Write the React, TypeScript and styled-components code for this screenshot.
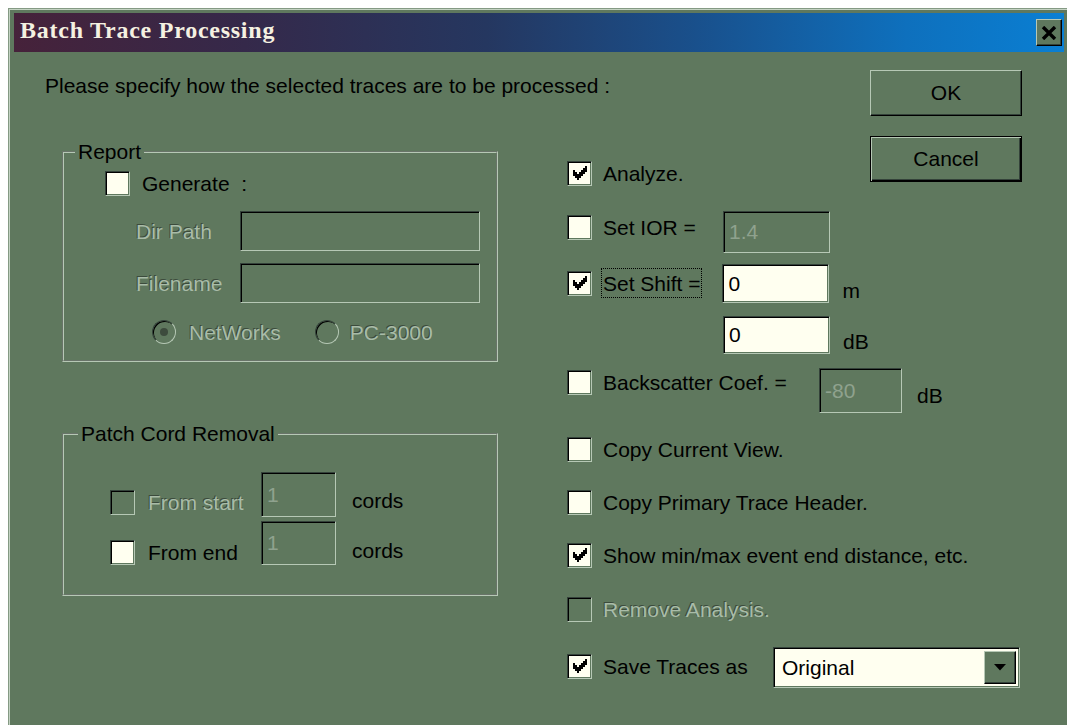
import React from 'react';
import styled, { createGlobalStyle, css } from 'styled-components';

// Colour scheme of the dialog (a green "desktop theme")
const C = {
  face: '#5f785e',
  light: '#b6c8b5',
  shadow: '#34423a',
  ivory: '#fffff0',
  grayText: '#8fa28e',
  etchLight: '#a9bca8',
  etchDark: '#3c4b3c',
};

const FONT = `"Liberation Sans", Arial, sans-serif`;

const Global = createGlobalStyle`
  html, body {
    margin: 0;
    padding: 0;
    background: #fff;
    overflow: hidden;
  }
  body {
    width: 1067px;
    height: 725px;
    font-family: ${FONT};
    font-size: 21px;
    color: #000;
  }
`;

const sunken = css`
  box-sizing: border-box;
  border: 1px solid;
  border-color: ${C.shadow} ${C.light} ${C.light} ${C.shadow};
  box-shadow: inset 1px 1px 0 #000, inset -1px -1px 0 ${C.face};
`;

const raised = css`
  box-sizing: border-box;
  border: 1px solid;
  border-color: ${C.light} #000 #000 ${C.light};
  box-shadow: inset -1px -1px 0 ${C.shadow};
  background: ${C.face};
`;

const etched = css`
  color: ${C.etchLight};
  text-shadow: -1px -1px 0 ${C.etchDark};
`;

/* ---------- window frame ---------- */

const Window = styled.div`
  box-sizing: border-box;
  margin: 8px 0 0 8px;
  width: 1062px;
  height: 717px;
  overflow: hidden;
  background: ${C.face};
  border: 1px solid #859a84;
  border-bottom: none;
  box-shadow: inset 1px 1px 0 #c3d2c2;
  padding: 4px 5px 0 5px;
  display: flex;
  flex-direction: column;
`;

const TitleBar = styled.div`
  height: 39px;
  flex: none;
  display: flex;
  align-items: center;
  justify-content: space-between;
  padding: 0 2px 0 6px;
  background: linear-gradient(
    to right,
    #46223a 0%,
    #35294a 22%,
    #253760 45%,
    #19508c 65%,
    #0e70bd 85%,
    #0a7fd3 100%
  );
`;

const TitleText = styled.span`
  font-family: "Liberation Serif", "Times New Roman", serif;
  font-weight: bold;
  font-size: 24px;
  line-height: 26px;
  letter-spacing: 0.75px;
  color: #f5f1e1;
  margin-bottom: 5px;
`;

const CloseButton = styled.button`
  ${raised};
  width: 26px;
  height: 27px;
  padding: 0;
  display: flex;
  align-items: center;
  justify-content: center;
`;

/* ---------- dialog body ---------- */

const Body = styled.div`
  display: grid;
  grid-template-columns: 455px 67px 455px;
  grid-template-rows: auto auto;
  align-items: start;
  padding: 18px 0 0 31px;
`;

const Intro = styled.p`
  grid-row: 1;
  grid-column: 1 / 3;
  margin: 4px 0 0 0;
  line-height: 24px;
  white-space: nowrap;
`;

const ButtonStack = styled.div`
  grid-row: 1 / 3;
  grid-column: 3;
  justify-self: end;
  display: flex;
  flex-direction: column;
  gap: 20px;
  position: relative;
  z-index: 1;
`;

const PushButton = styled.button<{ $default?: boolean }>`
  ${raised};
  width: 152px;
  height: 46px;
  font-family: ${FONT};
  font-size: 21px;
  color: #000;
  padding: 0;
  ${(p) =>
    p.$default &&
    css`
      border: 1px solid #000;
      box-shadow: inset 1px 1px 0 ${C.light}, inset -1px -1px 0 #000,
        inset -2px -2px 0 ${C.shadow};
    `}
`;

const LeftColumn = styled.div`
  grid-row: 2;
  grid-column: 1;
  display: flex;
  flex-direction: column;
`;

const Group = styled.fieldset<{ $mt: number; $pt: number; $pb: number }>`
  box-sizing: border-box;
  margin: ${(p) => p.$mt}px 0 0 17px;
  width: 436px;
  min-inline-size: 0;
  padding: ${(p) => p.$pt}px 0 ${(p) => p.$pb}px 0;
  border: 2px groove ${C.light};
  display: flex;
  flex-direction: column;
`;

const Legend = styled.legend<{ $ml: number }>`
  margin-left: ${(p) => p.$ml}px;
  padding: 0 3px;
  line-height: 24px;
  font-size: 21px;
`;

const Row = styled.div<{ $mt?: number; $ml?: number; $align?: string }>`
  display: flex;
  align-items: ${(p) => p.$align ?? 'center'};
  margin-top: ${(p) => p.$mt ?? 0}px;
  margin-left: ${(p) => p.$ml ?? 0}px;
`;

const CheckItem = styled.div<{ $gap: number; $mt?: number; $mb?: number; $ml?: number }>`
  display: flex;
  align-items: center;
  gap: ${(p) => p.$gap}px;
  margin-top: ${(p) => p.$mt ?? 0}px;
  margin-bottom: ${(p) => p.$mb ?? 0}px;
  margin-left: ${(p) => p.$ml ?? 0}px;
  flex: none;
`;

const Label = styled.span<{ $w?: number; $disabled?: boolean; $focus?: boolean }>`
  box-sizing: border-box;
  flex: none;
  line-height: 24px;
  padding-top: 2px;
  white-space: nowrap;
  width: ${(p) => (p.$w ? `${p.$w}px` : 'auto')};
  ${(p) => p.$disabled && etched};
  ${(p) =>
    p.$focus &&
    css`
      border: 1px dotted #000;
      padding: 2px 1px 2px 1px;
      height: 30px;
      line-height: 25px;
    `}
`;

const Unit = styled.span<{ $ml: number; $mb?: number }>`
  align-self: flex-end;
  margin-left: ${(p) => p.$ml}px;
  margin-bottom: ${(p) => p.$mb ?? 0}px;
  line-height: 24px;
`;

const CheckBox = styled.span<{ $disabled?: boolean }>`
  ${sunken};
  flex: none;
  width: 25px;
  height: 25px;
  display: inline-flex;
  align-items: center;
  justify-content: center;
  background: ${(p) => (p.$disabled ? C.face : C.ivory)};
`;

const RadioCircle = styled.span`
  box-sizing: border-box;
  flex: none;
  width: 24px;
  height: 24px;
  border-radius: 50%;
  border: 1px solid;
  border-color: ${C.shadow} ${C.light} ${C.light} ${C.shadow};
  box-shadow: inset 1px 1px 0 #000, inset -1px -1px 0 ${C.face};
  background: ${C.face};
  display: inline-flex;
  align-items: center;
  justify-content: center;
`;

const RadioDot = styled.span`
  width: 8px;
  height: 8px;
  border-radius: 50%;
  background: #3d4b3d;
`;

const Field = styled.input<{ $w: number; $h: number; $ml?: number; $active?: boolean }>`
  ${sunken};
  flex: none;
  width: ${(p) => p.$w}px;
  height: ${(p) => p.$h}px;
  margin: 0 0 0 ${(p) => p.$ml ?? 0}px;
  padding: 0 4px 0 5px;
  font-family: ${FONT};
  font-size: 21px;
  outline: none;
  background: ${(p) => (p.$active ? C.ivory : C.face)};
  color: ${(p) => (p.$active ? '#000' : C.grayText)};
  -webkit-text-fill-color: ${(p) => (p.$active ? '#000' : C.grayText)};
  opacity: 1;
`;

const OptionsColumn = styled.div`
  grid-row: 2;
  grid-column: 3;
  display: flex;
  flex-direction: column;
`;

const OptRow = styled.div<{ $mt: number }>`
  display: flex;
  align-items: flex-start;
  margin-top: ${(p) => p.$mt}px;
`;

const Select = styled.div`
  ${sunken};
  flex: none;
  width: 247px;
  height: 41px;
  background: ${C.ivory};
  display: flex;
  align-items: center;
  justify-content: space-between;
  padding: 2px 3px 2px 8px;
`;

const SelectText = styled.span`
  line-height: 24px;
`;

const DropButton = styled.span`
  ${raised};
  width: 32px;
  height: 33px;
  display: flex;
  align-items: center;
  justify-content: center;
`;

/* ---------- small drawings ---------- */

const CheckMark = () => (
  <svg width="14" height="14" viewBox="0 0 7 7" shapeRendering="crispEdges">
    <polygon
      fill="#000"
      points="0,2 1,2 1,3 2,3 2,4 3,4 3,3 4,3 4,2 5,2 5,1 6,1 6,0 7,0 7,3 6,3 6,4 5,4 5,5 4,5 4,6 3,6 3,7 2,7 2,6 1,6 1,5 0,5"
    />
  </svg>
);

const Check = ({ checked, disabled }: { checked?: boolean; disabled?: boolean }) => (
  <CheckBox $disabled={disabled}>{checked && <CheckMark />}</CheckBox>
);

const Radio = ({ selected }: { selected?: boolean }) => (
  <RadioCircle>{selected && <RadioDot />}</RadioCircle>
);

const CloseGlyph = () => (
  <svg width="16" height="14" viewBox="0 0 16 14">
    <path d="M2 1 L14 13 M14 1 L2 13" stroke="#000" strokeWidth="3.4" />
  </svg>
);

const DownArrow = () => (
  <svg width="12" height="7" viewBox="0 0 12 7">
    <polygon points="0,0 12,0 6,6.5" fill="#000" />
  </svg>
);

export default function App() {
  return (
    <>
      <Global />
      <Window>
        <TitleBar>
          <TitleText>Batch Trace Processing</TitleText>
          <CloseButton aria-label="Close">
            <CloseGlyph />
          </CloseButton>
        </TitleBar>

        <Body>
          <Intro>Please specify how the selected traces are to be processed :</Intro>

          <ButtonStack>
            <PushButton>OK</PushButton>
            <PushButton $default>Cancel</PushButton>
          </ButtonStack>

          <LeftColumn>
            <Group $mt={42} $pt={6} $pb={15}>
              <Legend $ml={11}>Report</Legend>
              <Row $ml={41}>
                <CheckItem $gap={12}>
                  <Check />
                  <Label>Generate&nbsp;&nbsp;:</Label>
                </CheckItem>
              </Row>
              <Row $mt={15} $ml={72}>
                <Label $w={104} $disabled>
                  Dir Path
                </Label>
                <Field $w={240} $h={40} disabled defaultValue="" />
              </Row>
              <Row $mt={12} $ml={72}>
                <Label $w={104} $disabled>
                  Filename
                </Label>
                <Field $w={240} $h={40} disabled defaultValue="" />
              </Row>
              <Row $mt={16} $ml={88}>
                <CheckItem $gap={13}>
                  <Radio selected />
                  <Label $disabled>NetWorks</Label>
                </CheckItem>
                <CheckItem $gap={11} $ml={34}>
                  <Radio />
                  <Label $disabled>PC-3000</Label>
                </CheckItem>
              </Row>
            </Group>

            <Group $mt={60} $pt={26} $pb={29}>
              <Legend $ml={14}>Patch Cord Removal</Legend>
              <Row $ml={46} $align="flex-end">
                <CheckItem $gap={13} $mb={2}>
                  <Check disabled />
                  <Label $w={113} $disabled>
                    From start
                  </Label>
                </CheckItem>
                <Field $w={75} $h={45} disabled defaultValue="1" />
                <Unit $ml={16} $mb={4}>
                  cords
                </Unit>
              </Row>
              <Row $mt={4} $ml={46} $align="flex-end">
                <CheckItem $gap={13}>
                  <Check />
                  <Label $w={113}>From end</Label>
                </CheckItem>
                <Field $w={75} $h={44} disabled defaultValue="1" />
                <Unit $ml={16} $mb={2}>
                  cords
                </Unit>
              </Row>
            </Group>
          </LeftColumn>

          <OptionsColumn>
            <OptRow $mt={62}>
              <CheckItem $gap={11}>
                <Check checked />
                <Label>Analyze.</Label>
              </CheckItem>
            </OptRow>

            <OptRow $mt={25}>
              <CheckItem $gap={11} $mt={3}>
                <Check />
                <Label $w={120}>Set IOR =</Label>
              </CheckItem>
              <Field $w={107} $h={42} disabled defaultValue="1.4" />
            </OptRow>

            <OptRow $mt={11}>
              <CheckItem $gap={9} $mt={4}>
                <Check checked />
                <Label $focus>Set Shift =</Label>
              </CheckItem>
              <Field $w={107} $h={39} $ml={20} $active readOnly defaultValue="0" />
              <Unit $ml={13}>m</Unit>
            </OptRow>

            <OptRow $mt={13}>
              <Field $w={107} $h={38} $ml={156} $active readOnly defaultValue="0" />
              <Unit $ml={13}>dB</Unit>
            </OptRow>

            <OptRow $mt={14}>
              <CheckItem $gap={11} $mt={1}>
                <Check />
                <Label $w={216}>Backscatter Coef. =</Label>
              </CheckItem>
              <Field $w={83} $h={45} disabled defaultValue="-80" />
              <Unit $ml={15} $mb={5}>
                dB
              </Unit>
            </OptRow>

            <OptRow $mt={23}>
              <CheckItem $gap={11}>
                <Check />
                <Label>Copy Current View.</Label>
              </CheckItem>
            </OptRow>

            <OptRow $mt={27}>
              <CheckItem $gap={11}>
                <Check />
                <Label>Copy Primary Trace Header.</Label>
              </CheckItem>
            </OptRow>

            <OptRow $mt={27}>
              <CheckItem $gap={11}>
                <Check checked />
                <Label>Show min/max event end distance, etc.</Label>
              </CheckItem>
            </OptRow>

            <OptRow $mt={28}>
              <CheckItem $gap={11}>
                <Check disabled />
                <Label $disabled>Remove Analysis.</Label>
              </CheckItem>
            </OptRow>

            <OptRow $mt={25}>
              <CheckItem $gap={11} $mt={6}>
                <Check checked />
                <Label $w={170}>Save Traces as</Label>
              </CheckItem>
              <Select>
                <SelectText>Original</SelectText>
                <DropButton>
                  <DownArrow />
                </DropButton>
              </Select>
            </OptRow>
          </OptionsColumn>
        </Body>
      </Window>
    </>
  );
}
